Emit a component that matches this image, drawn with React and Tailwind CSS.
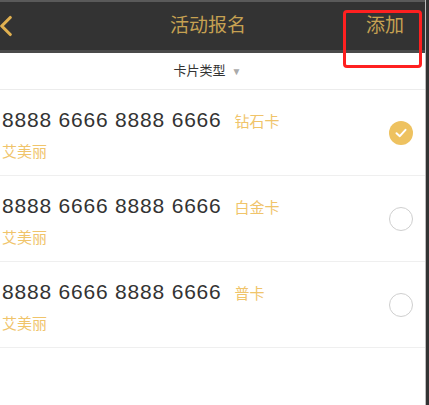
import { ChevronLeft } from 'lucide-react'

const cards = [
  { no: '8888 6666 8888 6666', type: '钻石卡', name: '艾美丽', checked: true },
  { no: '8888 6666 8888 6666', type: '白金卡', name: '艾美丽', checked: false },
  { no: '8888 6666 8888 6666', type: '普卡', name: '艾美丽', checked: false },
]

const font = { fontFamily: '"Liberation Sans", "Noto Sans CJK SC", sans-serif' }

export default function App() {
  return (
    <div className="relative w-[429px] h-[405px] flex bg-white overflow-hidden" style={font}>
      <div className="flex-1 flex flex-col">
        <div className="h-[2px] bg-[#5a5a5a]" />
        <header className="h-[51px] bg-[#333333] flex items-center justify-between text-[#c6a152] border-b-[3px] border-[#4a4a4a]">
          <ChevronLeft size={34} strokeWidth={2.2} className="text-[#e0b050] -ml-[11px]" />
          <h1 className="text-[19px] pl-[27px]">活动报名</h1>
          <span className="text-[19px] pr-[21px]">添加</span>
        </header>
        <div className="h-[37px] flex items-center justify-center gap-[6px] border-b border-[#ececec] pr-[10px]">
          <span className="text-[13px] text-[#333]">卡片类型</span>
          <span className="text-[10px] text-[#aaa] mt-[1px]">▼</span>
        </div>
        {cards.map((c, i) => (
          <div key={i} className="h-[86px] flex items-center border-b border-[#efefef] pl-[2px] pr-[12px]">
            <div className="flex-1 pt-[2px]">
              <div className="flex items-baseline">
                <span className="text-[21px] tracking-[0.8px] text-[#333]">{c.no}</span>
                <span className="text-[15px] text-[#f0c46a] ml-[13px]">{c.type}</span>
              </div>
              <p className="text-[15px] text-[#f0c46a] mt-[5px]">{c.name}</p>
            </div>
            {c.checked ? (
              <div className="w-[24px] h-[24px] rounded-full bg-[#eec260] flex items-center justify-center">
                <svg width="14" height="14" viewBox="0 0 14 14" fill="none">
                  <path d="M2.5 7.2 L5.8 10.2 L11.5 3.8" stroke="white" strokeWidth="2" strokeLinecap="round" strokeLinejoin="round" />
                </svg>
              </div>
            ) : (
              <div className="w-[24px] h-[24px] rounded-full border-[1.5px] border-[#cfcfcf]" />
            )}
          </div>
        ))}
      </div>
      <div className="w-[4px] bg-[#333] border-l border-[#bdbdbd]" />
      <div className="absolute left-[343px] top-[10px] w-[79px] h-[58px] border-[3px] border-[#ff2020] rounded-[4px]" />
    </div>
  )
}
